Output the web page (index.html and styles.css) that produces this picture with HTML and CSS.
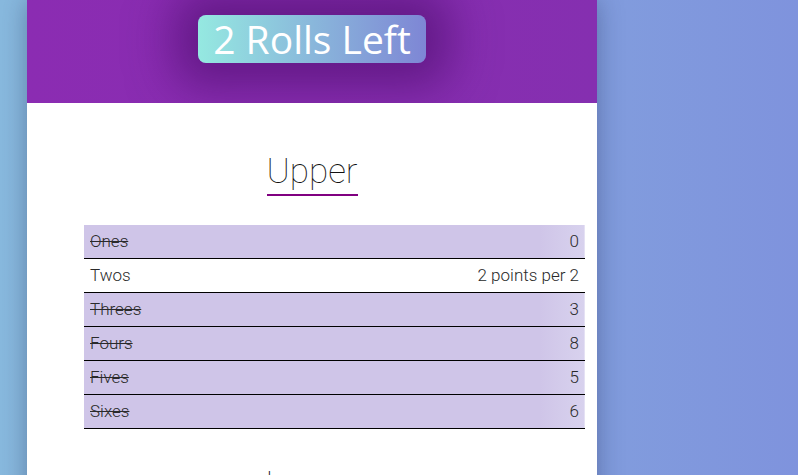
FILE: index.html
```html
<!DOCTYPE html>
<html lang="en">
<head>
<meta charset="utf-8">
<title>Yahtzee</title>
<link rel="stylesheet" href="styles.css">
</head>
<body>
<div class="page">
  <main class="sheet">
    <header class="top">
      <div class="rolls">2 Rolls Left</div>
    </header>
    <section class="group group-upper">
      <h2 class="group-title">Upper</h2>
      <table class="scores">
        <tbody>
          <tr class="used"><td class="name">Ones</td><td class="val">0</td></tr>
          <tr class="open"><td class="name">Twos</td><td class="val">2 points per 2</td></tr>
          <tr class="used"><td class="name">Threes</td><td class="val">3</td></tr>
          <tr class="used"><td class="name">Fours</td><td class="val">8</td></tr>
          <tr class="used"><td class="name">Fives</td><td class="val">5</td></tr>
          <tr class="used"><td class="name">Sixes</td><td class="val">6</td></tr>
        </tbody>
      </table>
    </section>
    <section class="group group-lower">
      <h2 class="group-title">Lower</h2>
    </section>
  </main>
</div>
</body>
</html>
```

FILE: styles.css
```css
html, body {
  margin: 0;
  padding: 0;
  height: 100%;
  overflow: hidden;
}
body {
  background: linear-gradient(to right, #88b9de 0%, #7f93dd 100%);
  font-family: Roboto, "Liberation Sans", sans-serif;
}
.page {
  display: flex;
  padding-left: 27px;
  min-height: 100%;
}
.sheet {
  width: 570px;
  background: #ffffff;
  box-shadow: 0 0 24px rgba(20, 30, 70, 0.35);
  min-height: 100vh;
}
.top {
  height: 103px;
  background: linear-gradient(to right, #8b2cb2, #852fb0);
  display: flex;
  justify-content: center;
  align-items: flex-start;
  padding-top: 15px;
  box-sizing: border-box;
  overflow: hidden;
}
.rolls {
  font-family: "Open Sans", "DejaVu Sans", sans-serif;
  font-size: 39px;
  line-height: 48px;
  height: 48px;
  color: #ffffff;
  padding: 0 15px 0 15px;
  border-radius: 8px;
  background: linear-gradient(to right, #95e9e1, #7e86d5);
  box-shadow: 0 0 46px 24px rgba(70, 10, 100, 0.55);
}
.group {
  display: flex;
  flex-direction: column;
  align-items: center;
}
.group-upper {
  padding-top: 48px;
}
.group-lower {
  padding-top: 35px;
}
.group-title {
  margin: 0;
  font-size: 35px;
  font-weight: 100;
  line-height: 42px;
  padding-bottom: 1px;
  color: #111;
  border-bottom: 2px solid #800080;
}
.scores {
  align-self: flex-start;
  margin: 29px 0 0 57px;
  width: 501px;
  border-collapse: collapse;
  font-size: 17px;
  font-weight: 300;
  color: #2a2a2a;
}
.scores td {
  height: 33px;
  line-height: 33px;
  padding: 0 6px;
  border-bottom: 1px solid #000;
  box-sizing: border-box;
  white-space: nowrap;
}
.scores .val {
  text-align: right;
}
.scores tr.used {
  background: linear-gradient(to right, #cfc5e8 0%, #cfc5e8 91%, #d8d2ee 100%);
}
.scores tr.used .name {
  text-decoration: line-through;
}
.scores tr.open {
  background: #ffffff;
}
```
